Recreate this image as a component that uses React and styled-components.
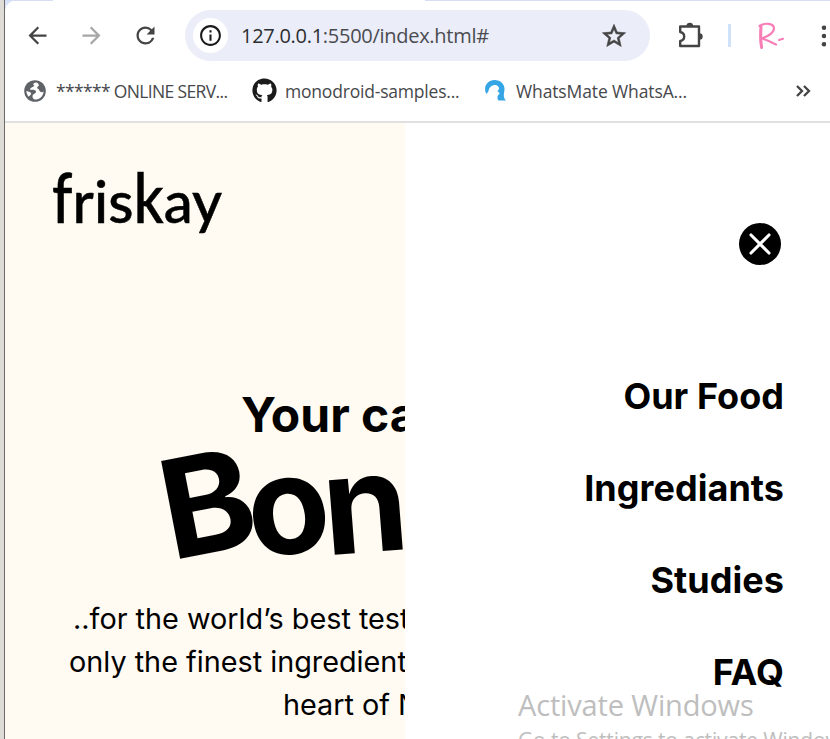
import React from "react";
import styled, { createGlobalStyle } from "styled-components";
import { FaGithub } from "react-icons/fa";
import {
  MdArrowBack,
  MdArrowForward,
  MdRefresh,
  MdStarBorder,
  MdInfoOutline,
} from "react-icons/md";

const GlobalStyle = createGlobalStyle`
  * { box-sizing: border-box; }
  html, body { margin: 0; height: 100%; overflow: hidden; background: #fff; }
  #root { height: 100%; }
`;

const Desktop = styled.div`
  display: flex;
  width: 830px;
  height: 739px;
  overflow: hidden;
  background: #dfdbd7;
  padding-left: 4px;
`;

const Window = styled.div`
  flex: 1;
  min-width: 0;
  display: flex;
  flex-direction: column;
  border-left: 1px solid #6c6a69;
  background: #d9e2f8;
`;

const Chrome = styled.header`
  height: 123px;
  flex: none;
  background: #fff;
  border-top-left-radius: 12px;
  border-bottom: 2px solid #e1e1e1;
  font-family: "Open Sans", "Noto Sans", sans-serif;
  color: #46484b;
`;

const TabEdge = styled.div`
  display: flex;
  justify-content: space-between;
  height: 1px;
`;

const TabStrip = styled.i`
  width: ${(p) => p.$width}px;
  background: #d5def5;
`;

const Toolbar = styled.div`
  display: flex;
  align-items: center;
  height: 69px;
  padding-left: 19px;
  color: #444;
`;

const NavButton = styled.button`
  width: 28px;
  height: 28px;
  margin-right: 26px;
  padding: 0 1px 0 0;
  border: 0;
  background: none;
  display: grid;
  place-items: center;
  color: ${(p) => (p.$muted ? "#a6a6a6" : "#444")};
`;

const AddressBar = styled.div`
  display: flex;
  align-items: center;
  width: 465px;
  height: 51px;
  flex: none;
  margin-left: -1px;
  padding: 0 22px 0 8px;
  border-radius: 26px;
  background: #ebedf8;
`;

const SiteInfo = styled.span`
  display: grid;
  place-items: center;
  width: 35px;
  height: 35px;
  border-radius: 50%;
  background: #fff;
  color: #1b1b1c;
`;

const Url = styled.span`
  flex: 1;
  margin-left: 13px;
  font-size: 20px;
  letter-spacing: -0.28px;
  white-space: nowrap;
  color: #4a4b50;
  b { font-weight: 400; color: #2c2d31; }
`;

const BookmarkStar = styled(MdStarBorder)`
  path:not([fill="none"]) {
    stroke: #444;
    stroke-width: 0.5px;
  }
`;

const Tools = styled.div`
  display: flex;
  align-items: center;
  flex: 1;
  min-width: 0;
  padding-left: 25px;
  svg { flex: none; }
`;

const Divider = styled.i`
  width: 3px;
  height: 23px;
  margin: 0 26px 0 23px;
  flex: none;
  background: #d0e2fa;
`;

const Kebab = styled.svg`
  margin-left: 28px;
`;

const Bookmarks = styled.nav`
  display: flex;
  align-items: center;
  height: 43px;
  padding: 0 19px 2px 18px;
`;

const Bookmark = styled.a`
  display: flex;
  align-items: center;
  flex: none;
  width: ${(p) => p.$width}px;
  gap: ${(p) => p.$gap}px;
  font-size: 17.5px;
  line-height: 24px;
  letter-spacing: ${(p) => p.$track}px;
  white-space: nowrap;
`;

const More = styled.svg`
  margin-left: auto;
`;

const Page = styled.main`
  flex: 1;
  min-height: 0;
  display: flex;
  background: #fffaf2;
  color: #000;
  font-family: Inter, sans-serif;
  font-optical-sizing: none;
`;

const Hero = styled.section`
  width: 400px;
  flex: none;
  overflow: hidden;
  white-space: nowrap;
`;

const Logo = styled.div`
  height: 99px;
  margin: 33px 0 0 47px;
  font-family: Lato, sans-serif;
  font-weight: 500;
  font-size: 58px;
  line-height: 90px;
  letter-spacing: 0.15px;
  -webkit-text-stroke: 0.5px #000;
`;

/* Ascenders of the wordmark stand taller than the text face draws them. */
const Tall = styled.span`
  display: inline-block;
  transform: scaleY(1.2);
  transform-origin: 50% 66px;
`;

const Kicker = styled.h2`
  margin: 131px 0 0 236px;
  font-size: 48px;
  line-height: 58px;
  font-weight: 700;
`;

const Headline = styled.h1`
  display: flex;
  margin: 0 0 0 159px;
  height: 151px;
  font-size: 137px;
  line-height: 130px;
  font-weight: 700;
`;

const Letter = styled.span`
  display: block;
  flex: none;
  width: ${(p) => p.$width}px;
  transform: translateY(${(p) => p.$drop}px) rotate(${(p) => p.$tilt}deg) scaleX(${(p) => p.$stretch || 1});
`;

const Copy = styled.p`
  margin: 2px 0 0;
  font-size: 28.8px;
  line-height: 43.2px;
`;

const Line = styled.span`
  display: block;
  padding-left: ${(p) => p.$indent}px;
`;

const Menu = styled.aside`
  flex: 1;
  min-width: 0;
  display: flex;
  flex-direction: column;
  position: relative;
  overflow: hidden;
  background: #fff;
`;

const Close = styled.button`
  align-self: flex-end;
  width: 42px;
  height: 42px;
  margin: 100px 49px 0 0;
  padding: 0;
  border: 0;
  border-radius: 50%;
  background: #000;
`;

const Links = styled.nav`
  display: flex;
  flex-direction: column;
  align-items: flex-end;
  gap: 48px;
  margin: 109px 46px 0 0;
`;

const MenuLink = styled.a`
  font-size: 36px;
  line-height: 44px;
  font-weight: 700;
  letter-spacing: 0.04px;
`;

const Watermark = styled.div`
  position: absolute;
  left: 113px;
  top: 562px;
  white-space: nowrap;
  font-family: "Open Sans", "Noto Sans", sans-serif;
  color: #bebebe;
  font-size: 29px;
  line-height: 40px;
  letter-spacing: -0.15px;
  small {
    display: block;
    font-size: 21px;
    line-height: 30px;
  }
`;

export default function App() {
  return (
    <Desktop>
      <GlobalStyle />
      <Window>
        <Chrome>
          <TabEdge>
            <TabStrip $width={48} />
            <TabStrip $width={405} />
          </TabEdge>
          <Toolbar>
            <NavButton aria-label="Back"><MdArrowBack size={27} /></NavButton>
            <NavButton aria-label="Forward" $muted><MdArrowForward size={27} /></NavButton>
            <NavButton aria-label="Reload"><MdRefresh size={27} /></NavButton>
            <AddressBar>
              <SiteInfo><MdInfoOutline size={25} /></SiteInfo>
              <Url><b>127.0.0.1</b>:5500/index.html#</Url>
              <BookmarkStar size={28} />
            </AddressBar>
            <Tools>
              <svg width="30" height="30" viewBox="0 0 30 30">
                <path d="M5.2 5.5H24V25H5.2V20C10.5 19 10.5 12 5.2 11Z" fill="none" stroke="#444" strokeWidth="2.4" strokeLinejoin="round" />
                <path d="M11.5 5a3.3 3.3 0 0 1 6.6 0zM24.5 12.2a3.2 3.2 0 0 1 0 6.4z" fill="#444" />
              </svg>
              <Divider />
              <svg width="29" height="30" viewBox="0 0 29 30" fill="none" stroke="#f77eb7" strokeLinecap="round">
                <path d="M4 6C3.4 12 3.4 20 4.6 26.5" strokeWidth="3" />
                <path d="M2.5 5C8 1.5 17 2 17 7.5C16.5 13 10 15.5 4.5 17.5C9 18 14 21.5 19 23.5" strokeWidth="2.2" />
                <path d="M22 19L26 17.8" strokeWidth="2.2" />
              </svg>
              <Kebab width="12" height="24" viewBox="0 0 12 24">
                <g fill="#444">
                  <circle cx="10" cy="3.7" r="2.3" />
                  <circle cx="10" cy="12" r="2.3" />
                  <circle cx="10" cy="20.2" r="2.3" />
                </g>
              </Kebab>
            </Tools>
          </Toolbar>
          <Bookmarks>
            <Bookmark $width={229} $gap={9} $track={-0.65}>
              <svg width="24" height="24" viewBox="0 0 24 24">
                <circle cx="12" cy="12" r="10.8" fill="#5f6368" />
                <path d="M13 3.4C9.5 4 10 6 11.5 6.6C10.5 8.5 7.5 8.2 7 10.5C8.5 11.5 12.5 10 13 12.5C13 15 9.5 14.5 9.5 17.5C9.5 19 10.5 20 11.5 20.6C16.5 20.8 20.6 17 20.6 12.5C19 14 16.5 13 16 10.5C13.5 9.5 13.8 7.5 16 6.8C16 5 14.5 3.6 13 3.4ZM3.4 12C4.5 12.3 7.4 12.6 8.2 14.5C8 16 6.4 16.4 5.8 17.8C4.2 16.3 3.4 14 3.4 12Z" fill="#fff" />
              </svg>
              ****** ONLINE SERV...
            </Bookmark>
            <Bookmark $width={232} $gap={8} $track={-0.2}>
              <FaGithub size={25} color="#1b1b1c" />monodroid-samples...
            </Bookmark>
            <Bookmark $width={210} $gap={9} $track={-0.12}>
              <svg width="23" height="23" viewBox="0 0 23 23">
                <path d="M2.4 15C-1.5 8 3.5 1 10.5 1C17.5 1 21.5 6.5 20.3 12C19.8 15.5 19 18.5 22 21.6H14.5C12.6 19 13.4 16.5 15.6 14.6C15.2 13.4 14.4 12.6 13.2 12.2C15.2 10.8 15.6 8.8 14.2 7.4C12 5.2 9 5.6 7 7.4C5.4 8.8 4.6 10.4 4.4 12.6Z" fill="#35a5e6" />
              </svg>
              WhatsMate WhatsA...
            </Bookmark>
            <More width="16" height="14" viewBox="0 0 16 14" fill="none" stroke="#444" strokeWidth="2.3">
              <path d="M2 2L7 7L2 12M9 2L14 7L9 12" />
            </More>
          </Bookmarks>
        </Chrome>
        <Page>
          <Hero>
            <Logo><Tall>f</Tall>ris<Tall>k</Tall>ay</Logo>
            <Kicker>Your cat</Kicker>
            <Headline>
              <Letter $width={83} $drop={-6} $tilt={-11} $stretch={1.03}>B</Letter>
              <Letter $width={76} $drop={-5} $tilt={-7} $stretch={0.98}>o</Letter>
              <Letter $width={90} $drop={-7} $tilt={-4.5}>n</Letter>
            </Headline>
            <Copy>
              <Line $indent={68}>..for the world’s best test</Line>
              <Line $indent={64}>only the finest ingredients</Line>
              <Line $indent={278}>heart of N</Line>
            </Copy>
          </Hero>
          <Menu>
            <Close aria-label="Close menu">
              <svg width="42" height="42" viewBox="0 0 42 42" stroke="#fff" strokeWidth="3.1" strokeLinecap="round">
                <path d="M12 12L30 30M30 12L12 30" />
              </svg>
            </Close>
            <Links>
              <MenuLink>Our Food</MenuLink>
              <MenuLink>Ingrediants</MenuLink>
              <MenuLink>Studies</MenuLink>
              <MenuLink>FAQ</MenuLink>
            </Links>
            <Watermark>
              Activate Windows
              <small>Go to Settings to activate Windows.</small>
            </Watermark>
          </Menu>
        </Page>
      </Window>
    </Desktop>
  );
}
